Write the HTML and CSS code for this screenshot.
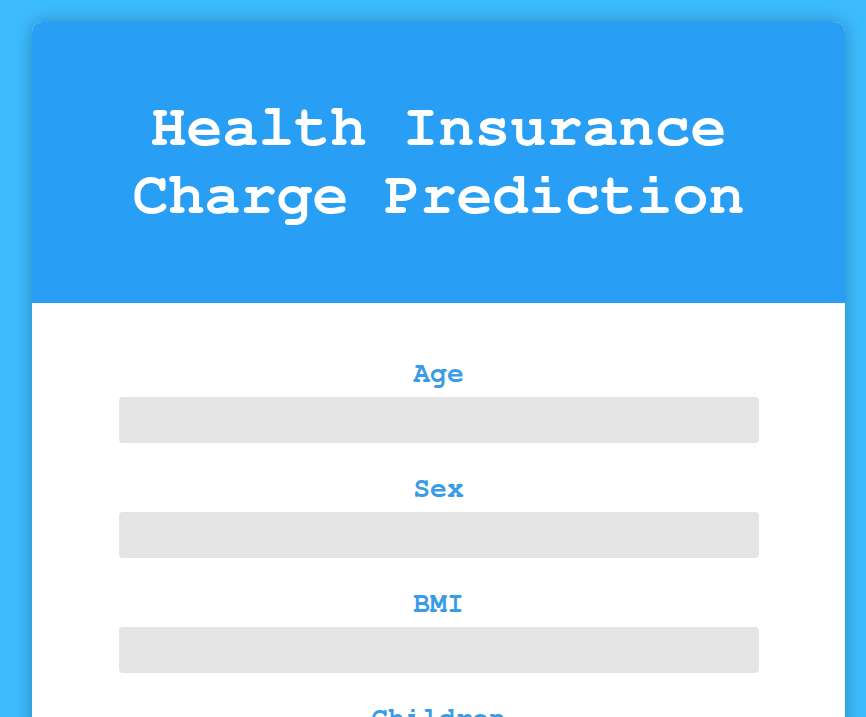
FILE: index.html
```html
<!DOCTYPE html>
<html>
<head>
<meta charset="utf-8">
<title>Health Insurance Charge Prediction</title>
<link rel="stylesheet" href="styles.css">
</head>
<body>
<div class="card">
  <header class="card-header">
    <h1 class="title">Health Insurance Charge Prediction</h1>
  </header>
  <form class="form">
    <div class="field">
      <label class="label" for="age">Age</label>
      <input class="input" id="age" type="text">
    </div>
    <div class="field">
      <label class="label" for="sex">Sex</label>
      <input class="input" id="sex" type="text">
    </div>
    <div class="field">
      <label class="label" for="bmi">BMI</label>
      <input class="input" id="bmi" type="text">
    </div>
    <div class="field">
      <label class="label" for="children">Children</label>
      <input class="input" id="children" type="text">
    </div>
    <div class="field">
      <label class="label" for="smoker">Smoker</label>
      <input class="input" id="smoker" type="text">
    </div>
  </form>
</div>
</body>
</html>
```

FILE: styles.css
```css
html, body {
  margin: 0;
  padding: 0;
}
body {
  background: #3dbcfd;
  font-family: "Nimbus Mono PS", "Nimbus Mono L", FreeMono, "Courier 10 Pitch", Courier, "Liberation Mono", monospace;
  padding: 22px 21px 40px 32px;
}
.card {
  width: 813px;
  background: #ffffff;
  border-radius: 10px;
  overflow: hidden;
  box-shadow: 0 0 18px rgba(0, 40, 90, 0.35);
}
.card-header {
  background: #289ef4;
  padding: 71px 0 74px;
  text-align: center;
}
.title {
  margin: 0;
  color: #ffffff;
  font-size: 60px;
  font-weight: bold;
  line-height: 68px;
}
.form {
  padding: 58px 0 20px;
  display: flex;
  flex-direction: column;
  align-items: center;
}
.field {
  width: 640px;
  margin-bottom: 33px;
  display: flex;
  flex-direction: column;
}
.label {
  color: #3a9be6;
  font-size: 28px;
  font-weight: bold;
  line-height: 26px;
  text-align: center;
  margin-bottom: 10px;
}
.input {
  height: 46px;
  box-sizing: border-box;
  border: none;
  border-radius: 4px;
  background: #e4e4e4;
  padding: 0 12px;
  font-family: inherit;
  font-size: 18px;
}
```
